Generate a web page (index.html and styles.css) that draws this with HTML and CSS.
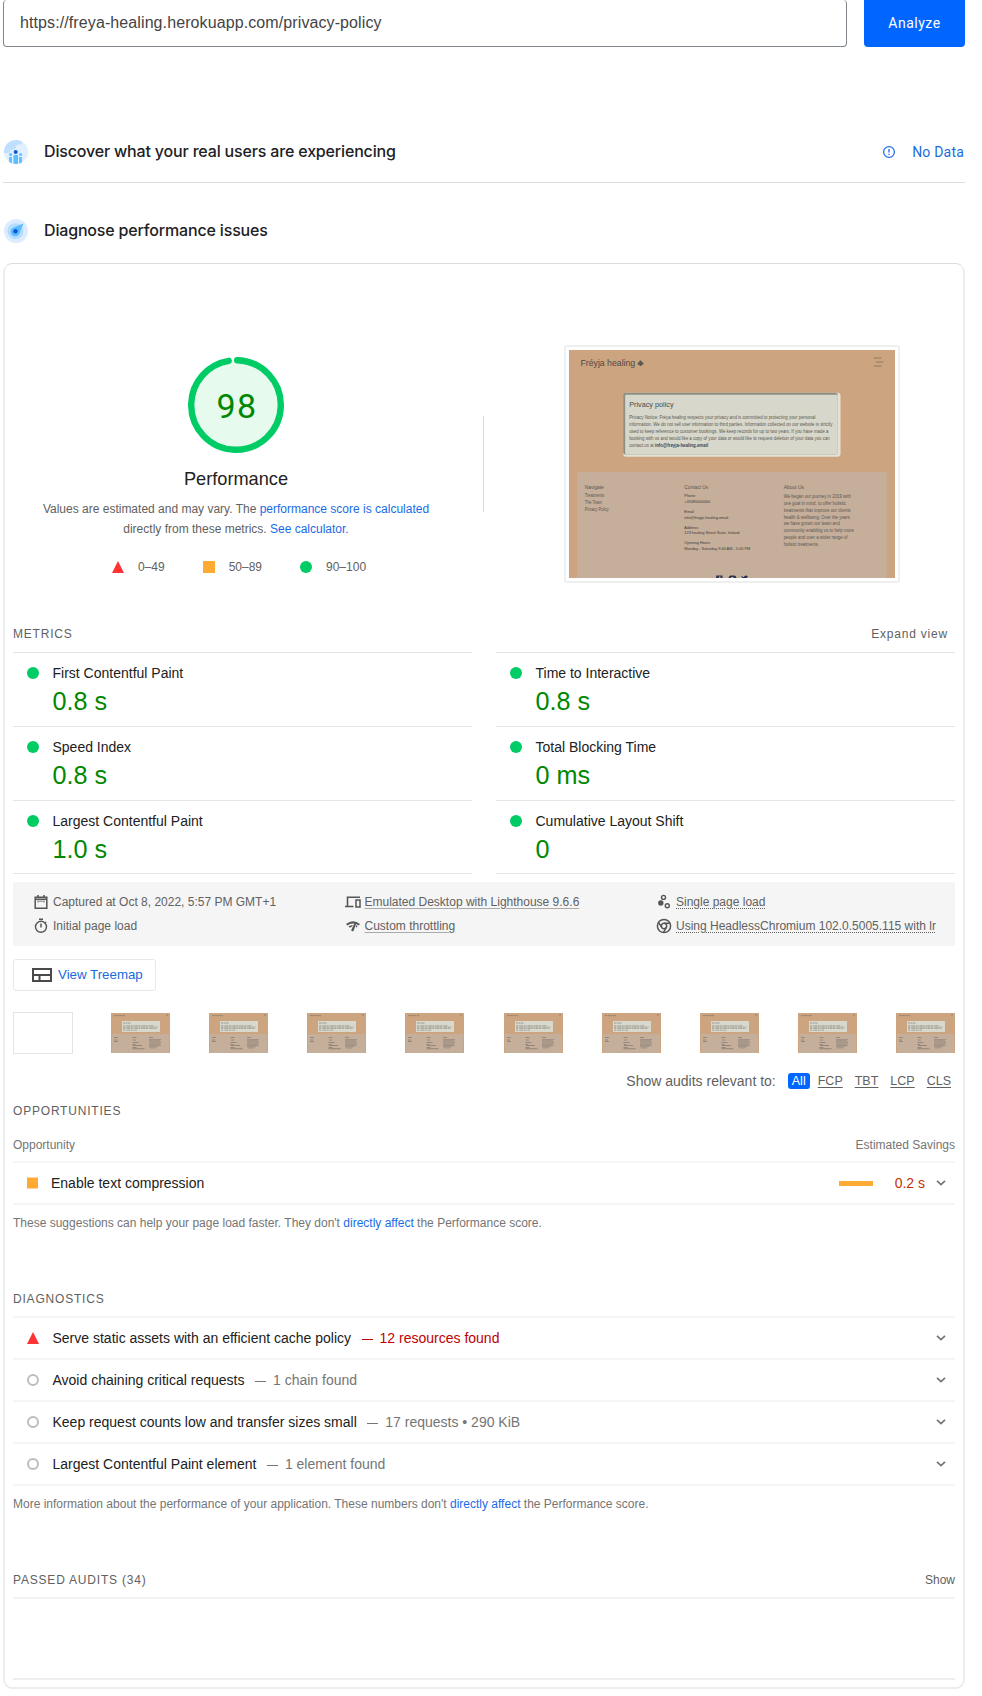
FILE: index.html
```html
<!DOCTYPE html>
<html lang="en">
<head>
<meta charset="utf-8">
<title>PageSpeed Insights</title>
<link rel="stylesheet" href="styles.css">
</head>
<body>
<svg class="defs" aria-hidden="true">
  <symbol id="thumb" viewBox="0 0 59 40" preserveAspectRatio="none">
    <rect width="59" height="40" fill="#cca47f"/>
    <rect x="1" y="21" width="57" height="19" fill="#c5ae9a"/>
    <rect x="11" y="8" width="38" height="11" fill="#d8d8cc"/>
    <g stroke="#6d6a66" stroke-width=".7" fill="none" opacity=".8">
      <path d="M3 2.6h11" stroke-dasharray="2 .6 3 .5"/>
      <path d="M55 2h2M12 10h8" stroke-dasharray="2 .5"/>
      <path d="M12 12.8h31M12 14.1h35M12 15.4h34M12 17.2h14" stroke-width=".6" stroke-dasharray="2 .7 1 .4 3 .6"/>
      <path d="M3 24.5h4M3 27h3M3 28.5h4M21.500 24.500h4M38 24.500h4M22 27h3M21.500 29.500h6M21.500 31.500h3M22 32.500h9M21.500 34.500h4M21.500 35.700h12"/>
      <path d="M38 26.500h12M38 27.700h11M38 28.900h12M38 30.100h12M38 31.300h11M38 32.500h12M38 33.700h9M39 34.900h6" stroke-width=".5"/>
    </g>
  </symbol>
  <symbol id="chev" viewBox="0 0 12 8"><path d="M2 1.800 6 5.600 10 1.800" fill="none" stroke="#757575" stroke-width="1.700"/></symbol>
</svg>

<main class="page">
  <div class="search">
    <div class="url">https://freya-healing.herokuapp.com/privacy-policy</div>
    <div class="analyze">Analyze</div>
  </div>

  <section class="heading heading-field">
    <svg class="badge-icon" viewBox="0 0 24 24">
      <clipPath id="c"><circle cx="12" cy="12" r="12"/></clipPath>
      <g clip-path="url(#c)">
        <rect width="24" height="24" fill="#e1efff"/>
        <path d="M0 13V0h20l-3 4-4 1-2 4-4 1-2 3z" fill="#bfdfff"/>
        <g fill="#66c2ff"><path d="M5 17h3v7H5zM15 17h3v7h-3z"/><circle cx="6.600" cy="14.600" r="1.500"/><circle cx="16.600" cy="14.600" r="1.500"/></g>
        <path d="M9.500 15h4.500v9H9.500z" fill="#5bc0fb"/>
        <circle cx="11.700" cy="12" r="2" fill="#0b57d8"/>
      </g>
    </svg>
    <h2 class="t-discover">Discover what your real users are experiencing</h2>
    <div class="nodata">
      <svg viewBox="0 0 14 14"><circle cx="7" cy="7" r="5.400" fill="none" stroke="#1a6be0" stroke-width="1.200"/><path d="M7 4v3.600M7 8.700v1.400" stroke="#1a6be0" stroke-width="1.300"/></svg>
      <span>No Data</span>
    </div>
  </section>

  <section class="heading heading-lab">
    <svg class="badge-icon" viewBox="0 0 24 24">
      <circle cx="12" cy="12" r="12" fill="#dcecff"/><circle cx="11.500" cy="12.200" r="8" fill="#b5dcff"/>
      <path d="M19.500 4.500 15.500 14.500A4.600 4.600 0 1 1 9.500 8.500Z" fill="#5bbcff"/><circle cx="11.500" cy="12.200" r="2.200" fill="#0b57d8"/>
    </svg>
    <h2 class="t-diagnose">Diagnose performance issues</h2>
  </section>

  <div class="card">
    <div class="summary">
      <div class="score">
        <div class="gauge">
          <svg viewBox="0 0 96 96">
            <circle cx="48" cy="48" r="45" fill="#e6faee"/>
            <circle cx="48" cy="48" r="44.800" fill="none" stroke="#0c6" stroke-width="6.400" stroke-linecap="round" stroke-dasharray="272.500 300" transform="rotate(-88.500 48 48)"/>
          </svg>
          <span class="gauge-num">98</span>
        </div>
        <div class="score-title">Performance</div>
        <p class="score-text"><span class="l1">Values are estimated and may vary. The <a>performance score is calculated</a></span><br><span class="l2">directly from these metrics. <a>See calculator.</a></span></p>
        <div class="legend">
          <span class="lg"><svg viewBox="0 0 12 12"><path d="M6 0 12 12H0z" fill="#f33"/></svg>0–49</span>
          <span class="lg"><svg viewBox="0 0 12 12"><path d="M0 0h12v12H0z" fill="#fa3"/></svg>50–89</span>
          <span class="lg"><svg viewBox="0 0 12 12"><circle cx="6" cy="6" r="6" fill="#0c6"/></svg>90–100</span>
        </div>
      </div>
      <div class="divider"></div>
      <div class="frame">
        <svg class="shot" viewBox="0 0 325 227" preserveAspectRatio="none" font-family="Liberation Sans, Arial, sans-serif" font-size="4.900" fill="#5c5650">
          <rect width="325" height="227" fill="#cca47f"/>
          <text x="11.500" y="16" font-size="8.400" textLength="54.500" lengthAdjust="spacingAndGlyphs" fill="#4f4a48">Fréyja healing</text>
          <g fill="#5c5650"><circle cx="71.300" cy="11.800" r="1.300"/><circle cx="69.700" cy="13.600" r="1.300"/><circle cx="72.900" cy="13.600" r="1.300"/><path d="M70.900 13h.8l.6 3h-2z"/></g>
          <path d="M304 8h7.500M306 12h7.500M304 16h7.500" stroke="#8c7865" stroke-width="1"/>
          <rect x="54" y="42.500" width="216.700" height="63.800" rx="3" fill="#e6e2d3"/>
          <rect x="54" y="42.500" width="214" height="61.500" rx="2.500" fill="#8f8e83"/>
          <rect x="56" y="44.500" width="212" height="59.500" rx="1" fill="#d7d8cb"/>
          <text x="60" y="57" font-size="6.800" textLength="44.300" lengthAdjust="spacingAndGlyphs" fill="#4a4a4c">Privacy policy</text>
          <g font-size="5">
            <text x="60" y="69.200" textLength="185.700" lengthAdjust="spacingAndGlyphs">Privacy Notice: Fréya healing respects your privacy and is committed to protecting your personal</text>
            <text x="60" y="75.800" textLength="202.700" lengthAdjust="spacingAndGlyphs">information. We do not sell user information to third parties. Information collected on our website is strictly</text>
            <text x="60" y="82.500" textLength="198.700" lengthAdjust="spacingAndGlyphs">used to keep reference to customer bookings. We keep records for up to two years. If you have made a</text>
            <text x="60" y="89.500" textLength="200" lengthAdjust="spacingAndGlyphs">booking with us and would like a copy of your data or would like to request deletion of your data you can</text>
            <text x="60" y="96.200" textLength="24.500" lengthAdjust="spacingAndGlyphs">contact us at</text>
            <text x="85.700" y="96.200" textLength="53" lengthAdjust="spacingAndGlyphs" font-weight="bold" fill="#3f4450">info@freyja-healing.email</text>
          </g>
          <path d="M8 121.500h308.700V227H8z" fill="#c5ae9a"/>
          <text x="15.700" y="138.200" textLength="19" lengthAdjust="spacingAndGlyphs">Navigate</text>
          <g font-size="4.400">
            <text x="15.700" y="146.800" textLength="19.300" lengthAdjust="spacingAndGlyphs">Treatments</text>
            <text x="15.700" y="153.800" textLength="17.300" lengthAdjust="spacingAndGlyphs">The Team</text>
            <text x="15.700" y="160.500" textLength="24" lengthAdjust="spacingAndGlyphs">Privacy Policy</text>
          </g>
          <text x="115" y="138.200" textLength="23.700" lengthAdjust="spacingAndGlyphs">Contact Us</text>
          <g font-size="4.300" fill="#3e3a36">
            <text x="115" y="146.800" textLength="11" lengthAdjust="spacingAndGlyphs">Phone</text>
            <text x="115" y="152.500" textLength="25.700" lengthAdjust="spacingAndGlyphs">+35380000000</text>
            <text x="115" y="162.500" textLength="9.500" lengthAdjust="spacingAndGlyphs">Email</text>
            <text x="115" y="168.200" textLength="43.700" lengthAdjust="spacingAndGlyphs">info@freyja-healing.email</text>
            <text x="115" y="177.800" textLength="13.700" lengthAdjust="spacingAndGlyphs">Address</text>
            <text x="115" y="183.500" textLength="55" lengthAdjust="spacingAndGlyphs">123 healing Street Suite, Ireland</text>
            <text x="115" y="193.500" textLength="25.700" lengthAdjust="spacingAndGlyphs">Opening Hours</text>
            <text x="115" y="199.200" textLength="65.700" lengthAdjust="spacingAndGlyphs">Monday - Saturday 9:00 AM - 5:00 PM</text>
          </g>
          <text x="214" y="138.200" textLength="20.300" lengthAdjust="spacingAndGlyphs">About Us</text>
          <g font-size="4.600">
            <text x="214" y="147.500" textLength="67" lengthAdjust="spacingAndGlyphs">We began our journey in 2019 with</text>
            <text x="214" y="154.200" textLength="62" lengthAdjust="spacingAndGlyphs">one goal in mind, to offer holistic</text>
            <text x="214" y="161.200" textLength="66.700" lengthAdjust="spacingAndGlyphs">treatments that improve our clients</text>
            <text x="214" y="167.800" textLength="66" lengthAdjust="spacingAndGlyphs">health &amp; wellbeing. Over the years</text>
            <text x="214" y="174.500" textLength="56" lengthAdjust="spacingAndGlyphs">we have grown our team and</text>
            <text x="214" y="181.500" textLength="70" lengthAdjust="spacingAndGlyphs">community enabling us to help more</text>
            <text x="214" y="188.200" textLength="63.700" lengthAdjust="spacingAndGlyphs">people and over a wider range of</text>
            <text x="214" y="194.800" textLength="35.300" lengthAdjust="spacingAndGlyphs">holistic treatments.</text>
          </g>
          <g fill="#2c3150"><path d="M146.700 224.500h6.300v2.500h-2v-1.500h-1.500v1.500h-2.800zM159 227q.5-2.500 2-2.500h4q1.500 0 2 2.500h-2.500l-1-1h-1.500l-1 1zM171.500 224.500l2.500 1.700q1-1.700 2.500-1.700l1.800.5-1 2h-4.500z"/></g>
        </svg>
      </div>
    </div>

    <div class="sec-head metrics-head"><span class="caps c-metrics">METRICS</span><span class="expand">Expand view</span></div>
    <div class="metrics">
      <div class="metric"><i class="dot"></i><div><div class="m-name">First Contentful Paint</div><div class="m-val">0.8 s</div></div></div>
      <div class="metric"><i class="dot"></i><div><div class="m-name">Time to Interactive</div><div class="m-val">0.8 s</div></div></div>
      <div class="metric"><i class="dot"></i><div><div class="m-name">Speed Index</div><div class="m-val">0.8 s</div></div></div>
      <div class="metric"><i class="dot"></i><div><div class="m-name">Total Blocking Time</div><div class="m-val">0 ms</div></div></div>
      <div class="metric last"><i class="dot"></i><div><div class="m-name">Largest Contentful Paint</div><div class="m-val">1.0 s</div></div></div>
      <div class="metric last"><i class="dot"></i><div><div class="m-name">Cumulative Layout Shift</div><div class="m-val">0</div></div></div>
    </div>

    <div class="env">
      <div class="e"><svg viewBox="0 0 16 16"><path d="M2.200 3.200h11.600v11H2.200zM2 5.200h12M5 1v3M11 1v3" fill="none" stroke="#555" stroke-width="1.500"/><path d="M5 6.500v2M7 6.500v1.500M9 6.500v1.500M11 6.500v2" stroke="#555"/></svg><span>Captured at Oct 8, 2022, 5:57 PM GMT+1</span></div>
      <div class="e"><svg viewBox="0 0 16 16"><path d="M0 12.500h8.500M2.500 12V3.200h12.500" fill="none" stroke="#555" stroke-width="1.600"/><path d="M11 6h4v7h-4z" fill="none" stroke="#555" stroke-width="1.500"/></svg><span class="u">Emulated Desktop with Lighthouse 9.6.6</span></div>
      <div class="e"><svg viewBox="0 0 16 16"><circle cx="4.800" cy="9" r="2.700" fill="#555"/><g fill="none" stroke="#555" stroke-width="1.400"><circle cx="7.500" cy="3.400" r="2"/><circle cx="11.300" cy="11.800" r="2"/></g></svg><span class="d">Single page load</span></div>
      <div class="e"><svg viewBox="0 0 16 16"><circle cx="8" cy="8.800" r="5.500" fill="none" stroke="#555" stroke-width="1.400"/><path d="M6 1.300h4M8 5.500v4M12 4l1 1" stroke="#555" stroke-width="1.500"/></svg><span>Initial page load</span></div>
      <div class="e"><svg viewBox="0 0 16 16"><path d="M1 6Q8 .5 15 6l-1.400 1.500-2.500-1.500L8.500 13q-1.800 1-2.300-.8L9.300 5.600Q5.500 5 2.500 7.400zM3.500 8.500Q5.500 7 7.800 7l-.8 1.800q-1.200.2-2.200 1zM11.500 7l1 1.300-1 1.300-.8-.5z" fill="#555"/></svg><span class="u">Custom throttling</span></div>
      <div class="e"><svg viewBox="0 0 16 16"><g fill="none" stroke="#555" stroke-width="1.500"><circle cx="8" cy="8" r="6.600"/><circle cx="8" cy="8" r="2.700"/><path d="M8 5.300h6M5.700 9.400 2.600 4.400M10.300 9.400 7.500 14.500"/></g></svg><span class="d">Using HeadlessChromium 102.0.5005.115 with lr</span></div>
    </div>

    <div class="treemap"><svg viewBox="0 0 20 14"><path d="M1 1h18v12H1zM1 7h18M7.500 7v6" fill="none" stroke="#4a4a4a" stroke-width="2"/></svg><span>View Treemap</span></div>

    <div class="film">
      <div class="blank"></div>
      <svg><use href="#thumb"/></svg><svg><use href="#thumb"/></svg><svg><use href="#thumb"/></svg>
      <svg><use href="#thumb"/></svg><svg><use href="#thumb"/></svg><svg><use href="#thumb"/></svg>
      <svg><use href="#thumb"/></svg><svg><use href="#thumb"/></svg><svg><use href="#thumb"/></svg>
    </div>

    <div class="filter"><span class="f-label">Show audits relevant to:</span><b>All</b><a>FCP</a><a>TBT</a><a>LCP</a><a>CLS</a></div>

    <div class="sec-head opp-head"><span class="caps">OPPORTUNITIES</span></div>
    <div class="cols"><span>Opportunity</span><span>Estimated Savings</span></div>
    <div class="audits">
      <div class="audit opp"><svg class="mk" viewBox="0 0 12 12"><path d="M0 .5h11v11H0z" fill="#fa3"/></svg><span>Enable text compression</span><i class="bar"></i><em>0.2 s</em><svg class="chev"><use href="#chev"/></svg></div>
    </div>
    <p class="note n1">These suggestions can help your page load faster. They don't <a>directly affect</a> the Performance score.</p>

    <div class="sec-head diag-head"><span class="caps">DIAGNOSTICS</span></div>
    <div class="audits">
      <div class="audit"><svg class="mk" viewBox="0 0 12 12"><path d="M6 0 12 12H0z" fill="#f33"/></svg><span>Serve static assets with an efficient cache policy</span><span class="res bad"><s></s>12 resources found</span><svg class="chev"><use href="#chev"/></svg></div>
      <div class="audit"><svg class="mk" viewBox="0 0 12 12"><circle cx="6" cy="6" r="5" fill="none" stroke="#bdbdbd" stroke-width="2"/></svg><span>Avoid chaining critical requests</span><span class="res"><s></s>1 chain found</span><svg class="chev"><use href="#chev"/></svg></div>
      <div class="audit"><svg class="mk" viewBox="0 0 12 12"><circle cx="6" cy="6" r="5" fill="none" stroke="#bdbdbd" stroke-width="2"/></svg><span>Keep request counts low and transfer sizes small</span><span class="res"><s></s>17 requests • 290 KiB</span><svg class="chev"><use href="#chev"/></svg></div>
      <div class="audit"><svg class="mk" viewBox="0 0 12 12"><circle cx="6" cy="6" r="5" fill="none" stroke="#bdbdbd" stroke-width="2"/></svg><span>Largest Contentful Paint element</span><span class="res"><s></s>1 element found</span><svg class="chev"><use href="#chev"/></svg></div>
    </div>
    <p class="note n2">More information about the performance of your application. These numbers don't <a>directly affect</a> the Performance score.</p>

    <div class="sec-head passed-head"><span class="caps">PASSED AUDITS (34)</span><span class="show">Show</span></div>
    <div class="passed-space"></div>
  </div>
</main>
</body>
</html>
```

FILE: styles.css
```css
* { box-sizing: border-box; }
body { margin: 0; background: #fff; color: #212121; font: 14px/20px "Liberation Sans", Arial, sans-serif; }
a { color: #1a6be8; }
.defs { display: none; }
svg { display: block; flex: none; }
.page { width: 982px; height: 1696px; overflow: hidden; padding: 0 17px 0 3px; }

.search { display: flex; justify-content: space-between; height: 47px; }
.url { width: 844px; height: 47px; border: 1px solid #80868b; border-top: 0; border-radius: 4px; padding-left: 16px; line-height: 46px; font-size: 16px; letter-spacing: .1px; color: #444; }
.analyze { width: 101px; border-radius: 0 0 4px 4px; background: #06f; color: #fff; font: 400 14px/46px Roboto, sans-serif; letter-spacing: .5px; text-align: center; }

.heading { display: flex; align-items: center; }
.heading h2 { margin: -1px 0 0 16px; font: 500 16px/24px Inter, sans-serif; color: #202124; }
.heading-field { margin-top: 74px; height: 62px; border-bottom: 1px solid #dadce0; }
.heading-lab { height: 80px; padding-top: 36px; align-items: flex-start; }
.badge-icon { width: 24px; height: 24px; margin-left: 1px; }
.t-discover, .t-diagnose { letter-spacing: -.17px; }
.nodata { margin-left: auto; padding-right: 1px; display: flex; align-items: center; gap: 16px; color: #1a6be0; font: 14px/20px Roboto, sans-serif; letter-spacing: .2px; }
.nodata svg { width: 14px; height: 14px; }

.card { height: 1426px; border: 2px solid #ebedee; border-top: 1px solid #dadce0; border-radius: 9px; padding: 0 8px; }
.summary { display: flex; height: 353px; margin: 0 -8px; }
.score { width: 462px; display: flex; flex-direction: column; align-items: center; padding-top: 93px; }
.gauge { width: 96px; height: 96px; display: grid; place-items: center; }
.gauge svg, .gauge-num { grid-area: 1 / 1; }
.gauge svg { width: 96px; height: 96px; }
.gauge-num { font: 34px/40px Roboto, sans-serif; letter-spacing: 1.5px; color: #080; padding: 2px 0 0 2px; }
.score-title { margin-top: 13px; font-size: 18.200px; line-height: 26px; }
.score-text { margin: 7px 0 0; font-size: 12px; line-height: 20px; color: #616161; text-align: center; white-space: nowrap; }
.legend { margin: 18px 0 0 6px; display: flex; gap: 38px; font-size: 12px; line-height: 20px; color: #616161; }
.lg { display: flex; align-items: center; gap: 14px; }
.lg svg { width: 12px; height: 12px; }
.divider { width: 1px; height: 96px; margin: 152px 80px 0 16px; background: #dcdcdc; }
.frame { width: 336px; height: 238px; margin-top: 81px; border: 2px solid #eeefef; border-radius: 3px; padding: 3px; }
.shot { width: 326px; height: 228px; }

.sec-head { display: flex; justify-content: space-between; align-items: center; font-size: 12px; line-height: 20px; color: #616161; }
.caps { letter-spacing: .8px; }
.metrics-head { height: 35px; padding-bottom: 1px; }
.expand { letter-spacing: .8px; padding-right: 7px; }
.metrics { display: grid; grid-template-columns: 459px 459px; column-gap: 24px; }
.metric { height: 74px; border-top: 1px solid #e4e6e6; display: flex; gap: 14px; padding: 10px 0 0 13.500px; }
.metric.last { border-bottom: 1px solid #e4e6e6; }
.dot { width: 12px; height: 12px; margin-top: 4px; border-radius: 50%; background: #0c6; }
.m-name { line-height: 21px; }
.m-val { font-size: 25.200px; line-height: 30px; margin-top: 2px; color: #080; }

.env { height: 64px; margin-top: 8px; padding: 8px 13px 8px 20px; background: #f5f5f5; border-radius: 2px; display: grid; grid-template-columns: 311.500px 311.500px 1fr; grid-template-rows: 24px 24px; align-items: center; font-size: 12px; line-height: 15px; color: #616161; white-space: nowrap; }
.e { display: flex; align-items: center; gap: 4px; }
.e svg { width: 16px; height: 16px; }
.u { text-decoration: underline; text-decoration-thickness: 1px; text-underline-offset: 2px; text-decoration-color: #aaa; }
.d { text-decoration: underline dotted; text-decoration-thickness: 1px; text-underline-offset: 2px; }

.treemap { width: 143px; height: 32px; margin-top: 13px; border: 1px solid #e8e8e8; border-radius: 3px; display: flex; align-items: center; padding-left: 18px; gap: 6px; color: #1a6be0; font-size: 13.300px; }
.treemap svg { width: 20px; height: 14px; }
.film { display: flex; justify-content: space-between; margin-top: 21px; height: 42px; }
.film svg { width: 59px; height: 40px; margin-top: 1px; }
.blank { width: 60px; height: 42px; margin-right: -1px; border: 1px solid #e4e4e4; }
.filter { display: flex; justify-content: flex-end; align-items: center; height: 16px; margin-top: 19px; padding-right: 4px; color: #616161; font-size: 12.500px; line-height: 16px; }
.f-label { font-size: 14px; margin-right: 12px; }
.filter b { width: 22px; border-radius: 3px; background: #06f; color: #fff; text-align: center; font-weight: 400; margin-right: 8px; }
.filter a { color: #616161; text-decoration: underline; text-underline-offset: 2px; margin-left: 12px; }
.filter b + a { margin-left: 0; }

.opp-head { height: 20px; margin-top: 12px; }
.cols { display: flex; justify-content: space-between; height: 40px; padding-top: 14px; font-size: 12px; line-height: 20px; color: #757575; }
.audits { border-top: 2px solid #f5f5f5; }
.audit { height: 42px; border-bottom: 2px solid #f5f5f5; display: flex; align-items: center; padding: 0 8px 0 13.500px; }
.mk { width: 12px; height: 12px; margin-right: 14px; }
.opp .mk { margin-right: 12.500px; }
.chev { width: 12px; height: 8px; margin-left: auto; }
.bar { width: 34px; height: 5px; margin-left: auto; background: #fa3; }
.audit em { font-style: normal; color: #c33300; width: 52px; text-align: right; margin-right: 10px; }
.opp .chev { margin-left: 0; }
.res { display: flex; align-items: center; color: #757575; }
.res s { width: 11px; height: 1px; margin: 2px 7px 0 10.500px; background: currentColor; }
.bad { color: #c00000; }
.note { margin: 0; font-size: 12px; line-height: 20px; color: #757575; white-space: nowrap; }
.n1 { padding-top: 8px; height: 76px; }
.diag-head { height: 35px; }
.n2 { padding-top: 8px; height: 77px; }
.passed-head { height: 36px; border-bottom: 2px solid #f3f3f3; }
.passed-space { height: 81px; border-bottom: 2px solid #eee; }
```
